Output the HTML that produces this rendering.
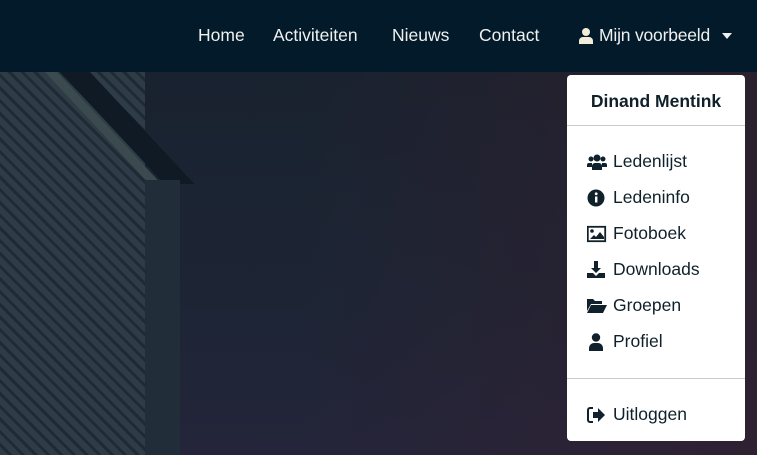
<!DOCTYPE html>
<html><head><meta charset="utf-8"><style>
*{margin:0;padding:0;box-sizing:border-box}
body{width:757px;height:455px;overflow:hidden;font-family:"Liberation Sans",sans-serif;position:relative;background:#1e2736}
.bg{position:absolute;left:0;top:72px;width:757px;height:383px;
background:
linear-gradient(90deg,rgba(30,28,45,0) 40%,rgba(55,30,45,.6) 100%),
linear-gradient(180deg,#19222f 0%,#1d2535 60%,#24253a 100%);}
.left{position:absolute;left:0;top:72px;width:145px;height:383px;
background:repeating-linear-gradient(45deg,#2d3c46 0 6px,#1f2a33 6px 9px);}
.beam{position:absolute;left:45px;top:72px;width:12px;height:112px;background:#3a4a4e;transform:skewX(43deg);transform-origin:top left}
.shadow{position:absolute;left:60px;top:72px;width:30px;height:112px;background:#0f1a24;transform:skewX(43deg);transform-origin:top left}
.strip{position:absolute;left:145px;top:180px;width:35px;height:275px;background:#222d3a}
.nav{position:absolute;left:0;top:0;width:757px;height:72px;background:#021a29}
.nav span{position:absolute;top:25px;color:#f0f0f0;font-size:17.5px}
.dd{position:absolute;left:567px;top:75px;width:178px;height:366px;background:#fff;border-radius:4px}
.hd{position:absolute;left:0;width:178px;top:16px;text-align:center;font-weight:bold;font-size:17.5px;color:#10212b}
.ln{position:absolute;left:0;width:178px;height:1px;background:#ccc}
.it{position:absolute;left:46px;font-size:17.5px;color:#10212b}
.ic{position:absolute;left:20px;width:20px;height:18px}
</style></head><body>
<div class="bg"></div><div class="left"></div><div class="shadow"></div><div class="beam"></div><div class="strip"></div>
<div class="nav">
<span style="left:198px">Home</span>
<span style="left:273px">Activiteiten</span>
<span style="left:392px">Nieuws</span>
<span style="left:479px">Contact</span>
<svg style="position:absolute;left:579px;top:28px" width="14" height="16" viewBox="0 0 14 16"><circle cx="7" cy="4" r="4" fill="#f3ecd8"/><path d="M0 16v-3a4 4 0 0 1 4-4h6a4 4 0 0 1 4 4v3z" fill="#f3ecd8"/></svg>
<span style="left:599px;letter-spacing:-0.2px">Mijn voorbeeld</span>
<svg style="position:absolute;left:722px;top:33px" width="10" height="6"><path d="M0 0h10L5 6z" fill="#f0f0f0"/></svg>
</div>
<div class="dd">
<div class="hd">Dinand Mentink</div>
<div class="ln" style="top:50px"></div>
<svg class="ic" style="top:78px" viewBox="0 0 20 18"><circle cx="10" cy="5" r="3.5" fill="#10212b"/><circle cx="4" cy="6" r="2.5" fill="#10212b"/><circle cx="16" cy="6" r="2.5" fill="#10212b"/><path d="M5 17v-4a3 3 0 0 1 3-3h4a3 3 0 0 1 3 3v4zM0 14v-2a2 2 0 0 1 2-2h3v4zM20 14v-2a2 2 0 0 0-2-2h-3v4z" fill="#10212b"/></svg>
<div class="it" style="top:76px">Ledenlijst</div>
<svg class="ic" style="top:114px" viewBox="0 0 20 18"><circle cx="9" cy="9" r="8.5" fill="#10212b"/><rect x="8" y="7.5" width="2.4" height="6" fill="#fff"/><circle cx="9.2" cy="4.8" r="1.4" fill="#fff"/></svg>
<div class="it" style="top:112px">Ledeninfo</div>
<svg class="ic" style="top:150px" viewBox="0 0 20 18"><rect x="0.8" y="1.8" width="17.4" height="14.4" fill="none" stroke="#10212b" stroke-width="1.8"/><circle cx="5" cy="6" r="1.8" fill="#10212b"/><path d="M3 14l4-4 2 2 4-5 4 5v2z" fill="#10212b"/></svg>
<div class="it" style="top:148px">Fotoboek</div>
<svg class="ic" style="top:186px" viewBox="0 0 20 18"><path d="M7 0h4v7h3l-5 5-5-5h3z" fill="#10212b"/><path d="M0 12h6l3 3 3-3h6v5H0z" fill="#10212b"/></svg>
<div class="it" style="top:184px">Downloads</div>
<svg class="ic" style="top:222px" viewBox="0 0 20 18"><path d="M0 2h6l2 2h7v3H4L0 14z" fill="#10212b"/><path d="M4 8h16l-4 8H0z" fill="#10212b"/></svg>
<div class="it" style="top:220px">Groepen</div>
<svg class="ic" style="top:258px" viewBox="0 0 20 18"><circle cx="9" cy="4.5" r="4.2" fill="#10212b"/><path d="M2 18v-3a5 5 0 0 1 5-5h4a5 5 0 0 1 5 5v3z" fill="#10212b"/></svg>
<div class="it" style="top:256px">Profiel</div>
<div class="ln" style="top:303px"></div>
<svg class="ic" style="top:331px" viewBox="0 0 20 18"><path d="M6 2H3a2 2 0 0 0-2 2v10a2 2 0 0 0 2 2h3" fill="none" stroke="#10212b" stroke-width="2"/><path d="M6 6h5V2l7 7-7 7v-4H6z" fill="#10212b"/></svg>
<div class="it" style="top:329px">Uitloggen</div>
</div>
</body></html>
